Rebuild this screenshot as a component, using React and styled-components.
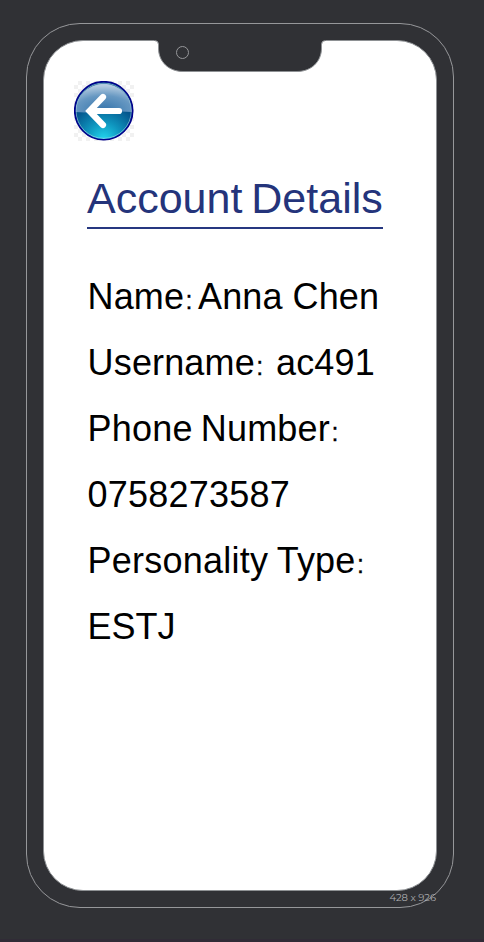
import React from "react";
import styled, { createGlobalStyle } from "styled-components";

const Global = createGlobalStyle`
  * { box-sizing: border-box; }
  body { margin: 0; background: #303135; }
`;

const Stage = styled.main`
  height: 942px;
  padding: 23px 0 0 26px;
  background: #303135;
  border-bottom: 3px solid #302b36;
  overflow: hidden;
`;

const Phone = styled.div`
  position: relative;
  width: 428px;
  height: 885px;
  padding: 16px;
  border: 1px solid #96979a;
  border-radius: 54px;
`;

const Screen = styled.section`
  position: relative;
  width: 394px;
  height: 851px;
  padding: 40px 0 0 30px;
  border: 1px solid #8e9194;
  border-radius: 40px;
  background: #fff;
`;

const Notch = styled.svg`
  position: absolute;
  top: -1px;
  left: 110px;
  display: block;
`;

const BackButton = styled.button`
  display: block;
  width: 60px;
  height: 60px;
  padding: 0;
  border: 0;
  background: repeating-conic-gradient(#f1f1f1 0 25%, #fff 0 50%) 0 0 / 8px 8px;
`;

const Details = styled.div`
  padding: 38px 0 0 13px;
  font-family: "Liberation Sans", Arial, sans-serif;
  color: #000;
`;

const Title = styled.h1`
  width: 296px;
  height: 50px;
  margin: 0 0 35px;
  border-bottom: 2px solid #263780;
  color: #24347b;
  font-size: 43px;
  font-weight: 400;
  line-height: 38px;
  word-spacing: -3px;
  white-space: nowrap;
`;

const Line = styled.p`
  height: 66px;
  margin: 0;
  padding-left: 0.6px;
  font-size: 36px;
  line-height: 66px;
  white-space: pre;
  letter-spacing: ${(p) => p.$tracking || 0}px;
  word-spacing: ${(p) => p.$gap || 0}px;
`;

const Colon = styled.span`
  display: inline-block;
  width: ${(p) => p.$width || 9}px;
  padding-left: 1.5px;
  font-size: 25px;
  letter-spacing: 0;
  -webkit-text-stroke: 0.3px #000;
`;

const SizeLabel = styled.span`
  position: absolute;
  right: 17px;
  bottom: 3px;
  color: #adaeb1;
  font: 10px/12px "Montserrat", "Open Sans", sans-serif;
  letter-spacing: -0.05px;
  white-space: nowrap;
`;

function BackIcon() {
  return (
    <svg width="60" height="60" viewBox="0 0 60 60" aria-hidden="true">
      <defs>
        <radialGradient id="water" cx="50%" cy="100%" r="62%">
          <stop offset="0" stopColor="#22d8ef" />
          <stop offset=".5" stopColor="#0e93bd" />
          <stop offset="1" stopColor="#04568d" />
        </radialGradient>
        <radialGradient id="gloss" cx="50%" cy="92%" r="85%">
          <stop offset="0" stopColor="#3474ab" />
          <stop offset=".6" stopColor="#6798c2" />
          <stop offset="1" stopColor="#b4cbe0" />
        </radialGradient>
      </defs>
      <circle cx="29.700" cy="29.700" r="29" fill="url(#water)" />
      <path d="M1.500 31a28.200 28.200 0 0 1 56.400 0Q44 30 30 31.500Q16 32 1.500 31z" fill="url(#gloss)" />
      <circle cx="29.700" cy="29.700" r="27.700" fill="none" stroke="#bed8e8" strokeOpacity=".55" />
      <circle cx="29.700" cy="29.700" r="29" fill="none" stroke="#00008b" strokeWidth="1.600" />
      <path d="M45 30H16M29 16L15.500 30L29 44" fill="none" stroke="#fff" strokeWidth="6.200" strokeLinecap="round" strokeLinejoin="miter" />
    </svg>
  );
}

export default function App() {
  return (
    <>
      <Global />
      <Stage>
        <Phone>
          <Screen>
            <Notch width="172" height="34" viewBox="0 0 172 34" aria-hidden="true">
              <path d="M0 0H172V.5H171.500Q167.500 .5 167.500 4.500V8C167.500 22 157 31.500 143 31.500H29C15 31.500 4.500 22 4.500 8V4.500Q4.500 .5 .5 .5H0z" fill="#303135" />
              <path d="M171.500 .5Q167.500 .5 167.500 4.500V8C167.500 22 157 31.500 143 31.500H29C15 31.500 4.500 22 4.500 8V4.500Q4.500 .5 .5 .5" fill="none" stroke="#8e9194" />
              <circle cx="28.500" cy="12.500" r="6" fill="none" stroke="#96979a" />
            </Notch>
            <BackButton aria-label="Back"><BackIcon /></BackButton>
            <Details>
              <Title>Account Details</Title>
              <Line $tracking={0.1}>Name<Colon $width={14}>{": "}</Colon>Anna Chen</Line>
              <Line $tracking={0.15} $gap={1}>Username<Colon $width={10}>:</Colon> ac491</Line>
              <Line $tracking={0.18} $gap={-2}>Phone Number<Colon>:</Colon></Line>
              <Line $tracking={0.22}>0758273587</Line>
              <Line $tracking={0.22} $gap={-1}>Personality Type<Colon>:</Colon></Line>
              <Line>ESTJ</Line>
            </Details>
          </Screen>
          <SizeLabel>428 x 926</SizeLabel>
        </Phone>
      </Stage>
    </>
  );
}
